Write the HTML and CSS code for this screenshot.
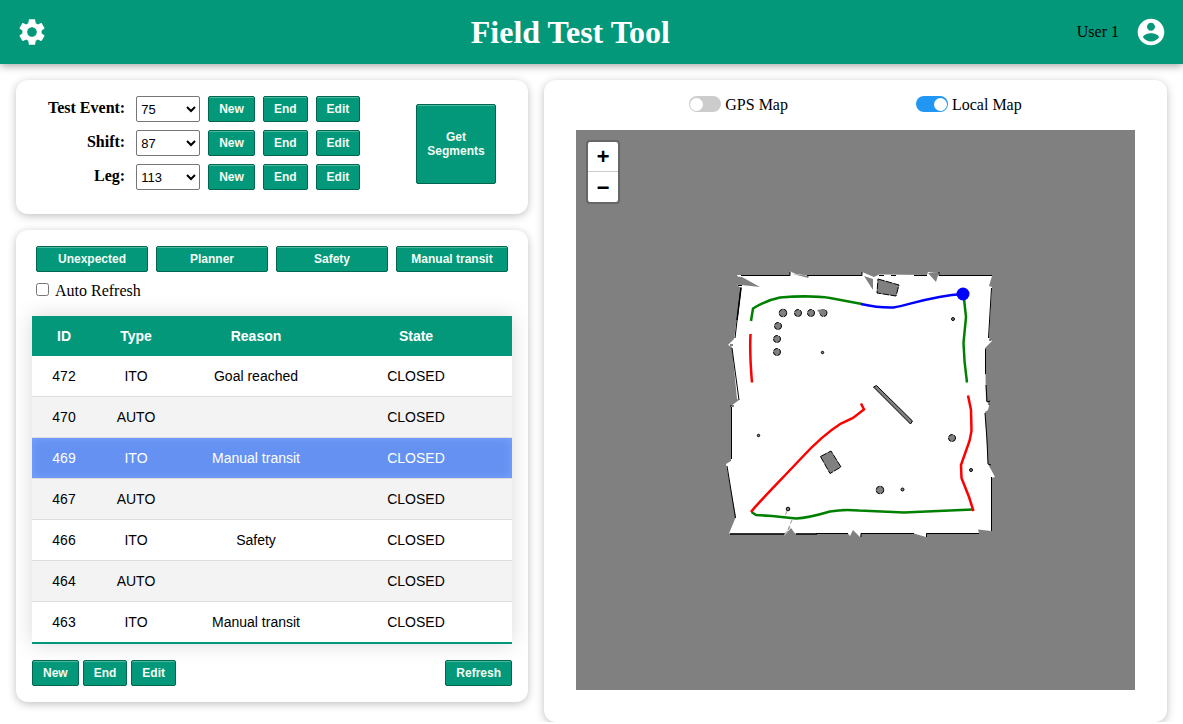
FILE: index.html
```html
<!DOCTYPE html>
<html lang="en">
<head>
<meta charset="utf-8">
<meta name="viewport" content="width=device-width, initial-scale=1">
<title>Field Test Tool</title>
<link rel="stylesheet" href="styles.css">
</head>
<body>
<header class="topbar">
  <button class="icon-btn settings" type="button" aria-label="Settings">
    <svg viewBox="0 0 24 24" aria-hidden="true"><path d="M19.14 12.94c.04-.3.06-.61.06-.94 0-.32-.02-.64-.07-.94l2.03-1.58c.18-.14.23-.41.12-.61l-1.92-3.32c-.12-.22-.37-.29-.59-.22l-2.39.96c-.5-.38-1.03-.7-1.62-.94l-.36-2.54c-.04-.24-.24-.41-.48-.41h-3.84c-.24 0-.43.17-.47.41l-.36 2.54c-.59.24-1.13.57-1.62.94l-2.39-.96c-.22-.08-.47 0-.59.22L2.74 8.87c-.12.21-.08.47.12.61l2.03 1.58c-.05.3-.09.63-.09.94s.02.64.07.94l-2.03 1.58c-.18.14-.23.41-.12.61l1.92 3.32c.12.22.37.29.59.22l2.39-.96c.5.38 1.03.7 1.62.94l.36 2.54c.05.24.24.41.48.41h3.84c.24 0 .44-.17.47-.41l.36-2.54c.59-.24 1.13-.56 1.62-.94l2.39.96c.22.08.47 0 .59-.22l1.92-3.32c.12-.22.07-.47-.12-.61l-2.01-1.58zM12 15.6c-1.98 0-3.6-1.62-3.6-3.6s1.62-3.6 3.6-3.6 3.6 1.62 3.6 3.6-1.62 3.6-3.6 3.6z"/></svg>
  </button>
  <h1 class="title">Field Test Tool</h1>
  <div class="user">
    <span>User 1</span>
    <button class="icon-btn" type="button" aria-label="Account">
      <svg viewBox="0 0 24 24" aria-hidden="true"><path d="M12 2C6.48 2 2 6.48 2 12s4.48 10 10 10 10-4.48 10-10S17.52 2 12 2zm0 3c1.66 0 3 1.34 3 3s-1.34 3-3 3-3-1.34-3-3 1.34-3 3-3zm0 14.2c-2.5 0-4.71-1.28-6-3.22.03-1.99 4-3.08 6-3.08 1.99 0 5.97 1.09 6 3.08-1.29 1.94-3.5 3.22-6 3.22z"/></svg>
    </button>
  </div>
</header>
<main class="layout">
  <div class="column">
    <section class="card session">
      <div class="fields">
        <label for="event">Test Event:</label>
        <select id="event"><option>75</option></select>
        <button class="btn" type="button">New</button><button class="btn" type="button">End</button><button class="btn" type="button">Edit</button>
        <label for="shift">Shift:</label>
        <select id="shift"><option>87</option></select>
        <button class="btn" type="button">New</button><button class="btn" type="button">End</button><button class="btn" type="button">Edit</button>
        <label for="leg">Leg:</label>
        <select id="leg"><option>113</option></select>
        <button class="btn" type="button">New</button><button class="btn" type="button">End</button><button class="btn" type="button">Edit</button>
      </div>
      <button class="btn get-segments" type="button">Get Segments</button>
    </section>
    <section class="card segments">
      <div class="reasons">
        <button class="btn" type="button">Unexpected</button>
        <button class="btn" type="button">Planner</button>
        <button class="btn" type="button">Safety</button>
        <button class="btn" type="button">Manual transit</button>
      </div>
      <div class="auto">
        <input type="checkbox" id="auto"><label for="auto">Auto Refresh</label>
      </div>
      <table class="table">
        <thead><tr><th class="c-id">ID</th><th class="c-type">Type</th><th class="c-reason">Reason</th><th class="c-state">State</th></tr></thead>
        <tbody>
          <tr><td>472</td><td>ITO</td><td>Goal reached</td><td class="c-state">CLOSED</td></tr>
          <tr><td>470</td><td>AUTO</td><td></td><td class="c-state">CLOSED</td></tr>
          <tr class="active"><td>469</td><td>ITO</td><td>Manual transit</td><td class="c-state">CLOSED</td></tr>
          <tr><td>467</td><td>AUTO</td><td></td><td class="c-state">CLOSED</td></tr>
          <tr><td>466</td><td>ITO</td><td>Safety</td><td class="c-state">CLOSED</td></tr>
          <tr><td>464</td><td>AUTO</td><td></td><td class="c-state">CLOSED</td></tr>
          <tr><td>463</td><td>ITO</td><td>Manual transit</td><td class="c-state">CLOSED</td></tr>
        </tbody>
      </table>
      <div class="actions">
        <button class="btn" type="button">New</button>
        <button class="btn" type="button">End</button>
        <button class="btn" type="button">Edit</button>
        <button class="btn refresh" type="button">Refresh</button>
      </div>
    </section>
  </div>
  <section class="card map-card">
    <div class="toggles">
      <label class="toggle"><input type="checkbox" role="switch">GPS Map</label>
      <label class="toggle"><input type="checkbox" role="switch" checked>Local Map</label>
    </div>
    <div class="map">
      <svg class="plan" viewBox="576 130 559 560" role="img" aria-label="Local map with segment tracks">
        <path fill="#fff" d="M737 275L790 275.500L790 271.500L796 274L808 275.500L862 275.500L862 272L874 277L879 274.500L927 275L928 272L939 273L940 276H992L989 286L992 287L989 338L992 341L985 348L986 401L990 402L988 410L985 412L988 464L995 477L991 478V531L978 529.500L979 533.500H926V537L914 533.500H861L860 537L853 530L850 536L848 533.500H795L791 528L784 536L785 533.500H729L735 519L736 517L726 464L731 461V406L739 400L737 399L732 347L728 345L734 339L741 288L737 285L741 284Z"/>
        <g fill="#808080">
          <path d="M737 276.500L742 277L760 287L737 284.500Z"/>
          <path d="M792 274L802 275L809 276L808 278L801 276Z"/>
          <path d="M864 276L873 279V290ZM928 273L936 282L939 272Z"/>
        </g>
        <g fill="none" stroke="#000" stroke-width="1">
          <path d="M741 275.500H790V272M807 275.500H862V272M879 275.500H884M891 275.500H896M914 275.500H927M939 272V275.500H992" />
          <path d="M741 287L735 338M732 348L739 400M738 285.500H742M731.500 407V459M727 466L735.500 518"/>
          <path stroke-width="1.500" d="M741 288L737 320M730 534H785M796 534H817"/>
          <path d="M816 533.500H848M861 537V533.500H914M926.500 537V533.500H979M991.500 477V531M991.500 288L988.500 338M985.500 349V374M986 385L987 402L990 401M985 413L987 440L988 464L991 465M730 345H733M989 401V405M989 340H991M730 406H734"/>
        </g>
        <g fill="#808080" stroke="#000" stroke-width="1">
          <g stroke-dasharray="7 1">
            <path d="M878 279L899 285L896 296L877 293Z"/>
            <path d="M820.500 456.500L831 451L841 467L830 473.500Z"/>
          </g>
          <path d="M873.500 387L876.500 385.500L912.500 421L910.500 424Z"/>
          <g stroke-dasharray="5 1">
            <circle cx="783" cy="313" r="3.800"/><circle cx="798" cy="313" r="3.500"/><circle cx="811" cy="313" r="3.500"/><circle cx="823.500" cy="313" r="3.500"/>
            <circle cx="778" cy="326" r="3.500"/><circle cx="777" cy="339" r="3.500"/><circle cx="777" cy="352" r="3.500"/>
            <circle cx="952" cy="438" r="3.500"/><circle cx="880" cy="490" r="3.800"/>
          </g>
          <path stroke="none" d="M817 310L824 309V316L821 315Z"/>
          <circle cx="822.500" cy="352.500" r="1.200"/><circle cx="953" cy="319" r="1.500"/><circle cx="758.500" cy="435.500" r="1.200"/><circle cx="971" cy="470" r="1.500"/><circle cx="902.500" cy="489.500" r="1.500"/><circle cx="788" cy="509" r="1.800"/>
        </g>
        <path fill="none" stroke="#999" stroke-width="1" stroke-dasharray="4 2" d="M787 511L785 516M792 520L787 532M784 535L791 526"/>
        <g fill="none" stroke-width="2.500">
          <path stroke="green" d="M751 321L753 308.500Q767 300 780 297.500C798 296 820 296.500 830 298L862 304"/>
          <path stroke="blue" d="M861 304Q879 308 893.500 307.500C909 305 931 296 963 294"/>
          <path stroke="green" d="M963.500 294L966 317L963.500 343Q964 362 967 382.500M751.500 512L756 515L772 516L796 518.500Q808 518 830 511.500Q843 509 859 510.500L904 512.500L938 511L973 509.500"/>
          <path stroke="red" d="M750.500 334Q749.500 354 752 382.500M968 395.500L971 410L971.500 431L969.500 441L961 465L961.500 478L969 497L973.500 511M751 512C758 503 777 484 800 459.500C816 442 829 431 841 423.500L853 418L864 409.500L861 403.500"/>
        </g>
        <circle cx="963" cy="294" r="6.500" fill="#00f"/>
      </svg>
      <div class="zoom">
        <button type="button" aria-label="Zoom in">+</button>
        <button type="button" aria-label="Zoom out">−</button>
      </div>
    </div>
  </section>
</main>
</body>
</html>
```

FILE: styles.css
```css
* { box-sizing: border-box; }

body {
  margin: 0;
  background: #fff;
  color: #000;
  font: 16px/18px "Liberation Serif", "Times New Roman", serif;
}

.topbar {
  display: flex;
  align-items: center;
  justify-content: space-between;
  height: 64px;
  padding: 0 16px;
  background: #029879;
  box-shadow: 0 2px 8px rgba(0, 0, 0, .35);
}

.icon-btn {
  display: block;
  width: 32px;
  height: 32px;
  padding: 0;
  border: 0;
  background: none;
}
.icon-btn svg { display: block; fill: #fff; }
.settings { margin-right: 16px; }

.title {
  margin: 0;
  color: #fff;
  font-size: 32px;
  line-height: 40px;
}

.user {
  display: flex;
  align-items: center;
  gap: 16px;
}

.layout {
  display: grid;
  grid-template-columns: 512px minmax(0, 1fr);
  align-items: start;
  gap: 16px;
  padding: 16px 16px 0;
}

.column {
  display: grid;
  gap: 16px;
}

.card {
  border-radius: 12px;
  background: #fff;
  box-shadow: 0 2px 8px rgba(0, 0, 0, .25);
}

.btn {
  height: 26px;
  padding: 0 10px;
  border: 1px solid #00664f;
  border-radius: 2px;
  background: #029879;
  box-shadow: inset 0 1px 0 #4dbb9f;
  color: #f4fbf4;
  font: bold 12px/14px "Liberation Sans", Arial, sans-serif;
}

.session {
  display: flex;
  align-items: flex-start;
  justify-content: space-between;
  padding: 16px 32px 24px;
}

.fields {
  display: grid;
  grid-template-columns: auto 64px auto auto auto;
  gap: 8px;
}
.fields label {
  padding: 3px 3px 0 0;
  font-weight: bold;
  text-align: right;
}
.fields select {
  height: 26px;
  border: 1px solid #767676;
  border-radius: 2px;
  background: #fff;
  color: #000;
  font: 13px "Liberation Sans", Arial, sans-serif;
}

.get-segments {
  width: 80px;
  height: 80px;
  margin-top: 8px;
}

.segments { padding: 16px; }

.reasons {
  display: grid;
  grid-template-columns: repeat(4, 1fr);
  gap: 8px;
  padding: 0 4px;
}

.auto {
  display: flex;
  align-items: flex-start;
  gap: 6px;
  padding: 10px 4px 16px;
}
.auto input {
  width: 13px;
  height: 13px;
  margin: 1px 0 0;
}

.table {
  width: 100%;
  table-layout: fixed;
  border-collapse: separate;
  border-spacing: 0;
  box-shadow: 0 0 20px rgba(0, 0, 0, .15);
  font: 14px/16px "Liberation Sans", Arial, sans-serif;
  text-align: center;
}
.table th {
  padding: 12px 0;
  background: #029879;
  color: #fff;
}
.table td {
  height: 41px;
  padding: 0;
  border-bottom: 1px solid #ddd;
}
.c-id { width: 64px; }
.c-type { width: 80px; }
.c-reason { width: 160px; }
.table .c-state { padding-right: 16px; }
.table tr:nth-child(even) td { background: #f3f3f3; }
.table tr:last-child td {
  height: 42px;
  border-bottom: 2px solid #029879;
}
.table .active {
  color: #fff;
  background: #6592f2;
  box-shadow: inset 0 0 10px #7ba3ff;
}

.actions {
  display: flex;
  gap: 4px;
  padding-top: 16px;
}
.refresh { margin-left: auto; }

.map-card { padding: 16px 32px 32px; }

.toggles {
  display: flex;
  justify-content: center;
  gap: 128px;
  padding-bottom: 16px;
}
.toggle {
  display: flex;
  align-items: flex-start;
  gap: 4px;
}
.toggle input {
  appearance: none;
  display: flex;
  align-items: center;
  width: 32px;
  height: 16px;
  margin: 0;
  padding: 0 1px;
  border-radius: 8px;
  background: #ccc;
}
.toggle input::before {
  content: "";
  width: 13px;
  height: 13px;
  border-radius: 50%;
  background: #fff;
}
.toggle input:checked {
  justify-content: flex-end;
  background: #2196f3;
}

.map {
  position: relative;
  background: #808080;
}
.plan {
  display: block;
  width: 100%;
}

.zoom {
  position: absolute;
  top: 10px;
  left: 10px;
  border: 2px solid rgba(0, 0, 0, .2);
  border-radius: 4px;
  background: #fff;
  background-clip: padding-box;
}
.zoom button {
  display: block;
  width: 30px;
  height: 30px;
  padding: 5px 0 0;
  border: 0;
  background: none;
  color: #000;
  font: bold 22px/24px "Liberation Mono", monospace;
}
.zoom button:first-child { border-bottom: 1px solid #ccc; }
```
